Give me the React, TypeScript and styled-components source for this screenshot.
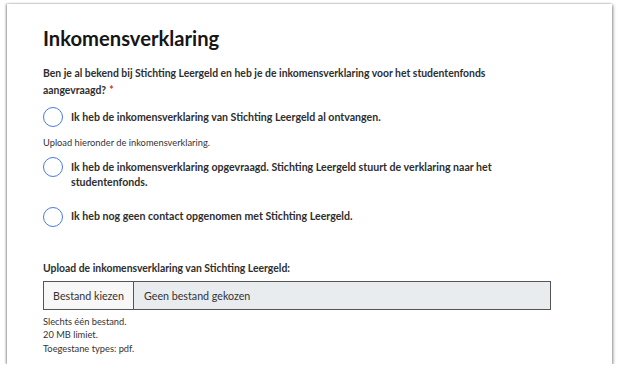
import React from "react";
import styled, { createGlobalStyle } from "styled-components";

const GlobalStyle = createGlobalStyle`
  body {
    margin: 0;
    background: #ffffff;
    font-family: Lato, "Liberation Sans", sans-serif;
    color: #2b2b2b;
  }
`;

const Card = styled.section`
  box-sizing: border-box;
  margin: 4px 7px 0 7px;
  height: 360px;
  padding: 21px 36px 0 36px;
  background: #fff;
  box-shadow: -1px 0 2px rgba(0, 0, 0, 0.35), 1px 1px 3px rgba(0, 0, 0, 0.45);
  display: flex;
  flex-direction: column;
`;

const Title = styled.h2`
  margin: 0;
  font-size: 20.2px;
  line-height: 26px;
  font-weight: 700;
  color: #161616;
`;

const Question = styled.p`
  margin: 14px 0 0;
  font-size: 10.4px;
  line-height: 17px;
  font-weight: 700;
  color: #2e2e2e;
`;

const QuestionLine = styled.span`
  display: block;
`;

const Required = styled.span`
  margin-left: 3px;
  color: #d0312d;
`;

const Option = styled.label<{ $gap: number }>`
  display: flex;
  align-items: flex-start;
  gap: 8px;
  margin-top: ${(p) => p.$gap}px;
`;

const Radio = styled.span`
  flex: none;
  box-sizing: border-box;
  width: 20px;
  height: 20px;
  border-radius: 50%;
  border: 1.5px solid #4a7be0;
`;

const OptionText = styled.span`
  font-size: 10.6px;
  line-height: 15px;
  font-weight: 700;
  color: #2e2e2e;
  padding-top: 2.5px;
  max-width: 440px;
`;

const Help = styled.p`
  margin: 10px 0 0;
  font-size: 9.3px;
  line-height: 12px;
  color: #333;
`;

const UploadLabel = styled.p`
  margin: 34px 0 0;
  font-size: 10.4px;
  line-height: 14px;
  font-weight: 700;
  color: #2e2e2e;
`;

const FileInput = styled.div`
  margin-top: 6px;
  width: 508px;
  height: 29px;
  box-sizing: border-box;
  border: 1px solid #555;
  display: flex;
  background: #e9ecef;
  font-size: 10.7px;
  color: #333;
`;

const FileButton = styled.span`
  width: 89px;
  border-right: 1px solid #555;
  background: #f7f7f7;
  display: flex;
  align-items: center;
  justify-content: center;
`;

const FileName = styled.span`
  display: flex;
  align-items: center;
  padding-left: 10px;
`;

const Notes = styled.div`
  margin-top: 5px;
  font-size: 9.3px;
  line-height: 13.5px;
  color: #333;
`;

export default function App() {
  return (
    <>
      <GlobalStyle />
      <Card>
        <Title>Inkomensverklaring</Title>
        <Question>
          <QuestionLine>
            Ben je al bekend bij Stichting Leergeld en heb je de inkomensverklaring voor het studentenfonds
          </QuestionLine>
          <QuestionLine>
            aangevraagd?<Required>*</Required>
          </QuestionLine>
        </Question>
        <Option $gap={8}>
          <Radio />
          <OptionText>Ik heb de inkomensverklaring van Stichting Leergeld al ontvangen.</OptionText>
        </Option>
        <Help>Upload hieronder de inkomensverklaring.</Help>
        <Option $gap={8}>
          <Radio />
          <OptionText>
            Ik heb de inkomensverklaring opgevraagd. Stichting Leergeld stuurt de verklaring naar het
            studentenfonds.
          </OptionText>
        </Option>
        <Option $gap={17}>
          <Radio />
          <OptionText>Ik heb nog geen contact opgenomen met Stichting Leergeld.</OptionText>
        </Option>
        <UploadLabel>Upload de inkomensverklaring van Stichting Leergeld:</UploadLabel>
        <FileInput>
          <FileButton>Bestand kiezen</FileButton>
          <FileName>Geen bestand gekozen</FileName>
        </FileInput>
        <Notes>
          <div>Slechts één bestand.</div>
          <div>20 MB limiet.</div>
          <div>Toegestane types: pdf.</div>
        </Notes>
      </Card>
    </>
  );
}
